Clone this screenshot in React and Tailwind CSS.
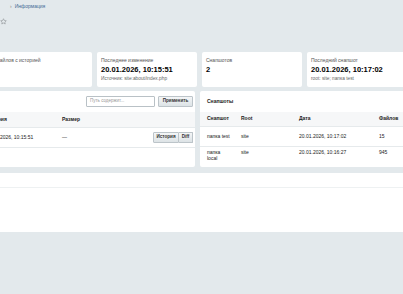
import React from "react";

function Card({ label, value, sub }) {
  return (
    <div className="h-[35px] rounded-[2px] bg-white px-[4px] pt-[5px]">
      <div className="h-[6px] text-[5px] leading-[6px] text-[#555] whitespace-nowrap">{label}</div>
      <div className="mt-[2px] h-[10px] text-[7.5px] font-bold leading-[10px] text-black whitespace-nowrap">{value}</div>
      <div className="mt-[1px] h-[6px] text-[4.8px] leading-[6px] text-[#666] whitespace-nowrap">{sub}</div>
    </div>
  );
}

function Btn({ children, className = "" }) {
  return (
    <div
      className={
        "flex h-[11px] items-center justify-center border border-[#bcc4c9] bg-gradient-to-b from-[#f4f6f7] to-[#dde3e6] text-[4.6px] font-bold text-[#333] " +
        className
      }
    >
      {children}
    </div>
  );
}

export default function App() {
  return (
    <div className="h-[294px] w-[403px] overflow-hidden bg-[#e3e9ec] font-['Liberation_Sans',Arial,sans-serif]">
      <div className="ml-[-8px] w-[420px]">
        {/* breadcrumb */}
        <div className="flex h-[14px] items-center text-[5px] text-[#3f6b95]">
          <span className="ml-[-12px]">Главная</span>
          <span className="ml-[11px] text-[#888]">›</span>
          <span className="ml-[3px]">Информация</span>
        </div>
        {/* star */}
        <div className="flex h-[14px] items-center pl-[8px]">
          <svg width="7" height="7" viewBox="0 0 24 24" fill="none" stroke="#8a8f93" strokeWidth="2" strokeLinejoin="round">
            <path d="M12 2.5l2.9 6.1 6.6.8-4.9 4.6 1.3 6.6L12 17.3l-5.9 3.3 1.3-6.6-4.9-4.6 6.6-.8z" />
          </svg>
        </div>
        {/* cards */}
        <div className="mt-[24px] grid grid-cols-[100px_100px_100px_100px] gap-[5px]">
          <Card label="Файлов с историей" value="" sub="" />
          <Card label="Последнее изменение" value="20.01.2026, 10:15:51" sub="Источник: site:about/index.php" />
          <Card label="Снапшотов" value="2" sub="" />
          <Card label="Последний снапшот" value="20.01.2026, 10:17:02" sub="root: site; папка test" />
        </div>
        {/* panels */}
        <div className="mt-[4px] grid grid-cols-[203px_220px] gap-[5px]">
          <div className="h-[76px] rounded-[2px] bg-white">
            <div className="flex h-[21px] items-center justify-end gap-[3px] pr-[2px]">
              <div className="flex h-[11px] w-[69px] items-center rounded-[1px] border border-[#b9c1c6] bg-white pl-[3px] text-[4.5px] text-[#999]">
                Путь содержит...
              </div>
              <Btn className="w-[35px] rounded-[1px]">Применить</Btn>
            </div>
            <div className="grid h-[16px] grid-cols-[68px_1fr] items-center border-b border-[#e6eaec] bg-[#f6f7f8] pl-[2px] text-[5px] font-bold text-[#222]">
              <span className="ml-[-8px]">История</span>
              <span>Размер</span>
            </div>
            <div className="grid h-[20px] grid-cols-[68px_1fr_auto] items-center border-b border-[#e6eaec] pl-[2px] pr-[2px] text-[5px] text-[#222]">
              <span className="ml-[-8px] whitespace-nowrap">20.01.2026, 10:15:51</span>
              <span>—</span>
              <div className="flex">
                <Btn className="w-[26px] rounded-l-[1px]">История</Btn>
                <Btn className="w-[14px] rounded-r-[1px] border-l-0">Diff</Btn>
              </div>
            </div>
          </div>
          <div className="h-[76px] rounded-[2px] bg-white">
            <div className="flex h-[21px] items-center pl-[7px] text-[5px] font-bold text-[#222]">Снапшоты</div>
            <div className="grid h-[15px] grid-cols-[34px_58px_80px_1fr] items-center border-b border-[#e6eaec] bg-[#f6f7f8] pl-[7px] text-[5px] font-bold text-[#222]">
              <span>Снапшот</span>
              <span>Root</span>
              <span>Дата</span>
              <span>Файлов</span>
            </div>
            <div className="grid h-[20px] grid-cols-[34px_58px_80px_1fr] items-center border-b border-[#e6eaec] pl-[7px] text-[5px] text-[#222]">
              <span>папка test</span>
              <span>site</span>
              <span>20.01.2026, 10:17:02</span>
              <span>15</span>
            </div>
            <div className="grid h-[20px] grid-cols-[34px_58px_80px_1fr] items-start pl-[7px] pt-[3px] text-[5px] leading-[5.5px] text-[#222]">
              <span className="w-[16px]">папка local</span>
              <span>site</span>
              <span>20.01.2026, 10:16:27</span>
              <span>945</span>
            </div>
          </div>
        </div>
        {/* bottom band */}
        <div className="mt-[6px] h-[59px] bg-white">
          <div className="h-[15px] border-b border-[#eef1f2]" />
        </div>
      </div>
    </div>
  );
}
